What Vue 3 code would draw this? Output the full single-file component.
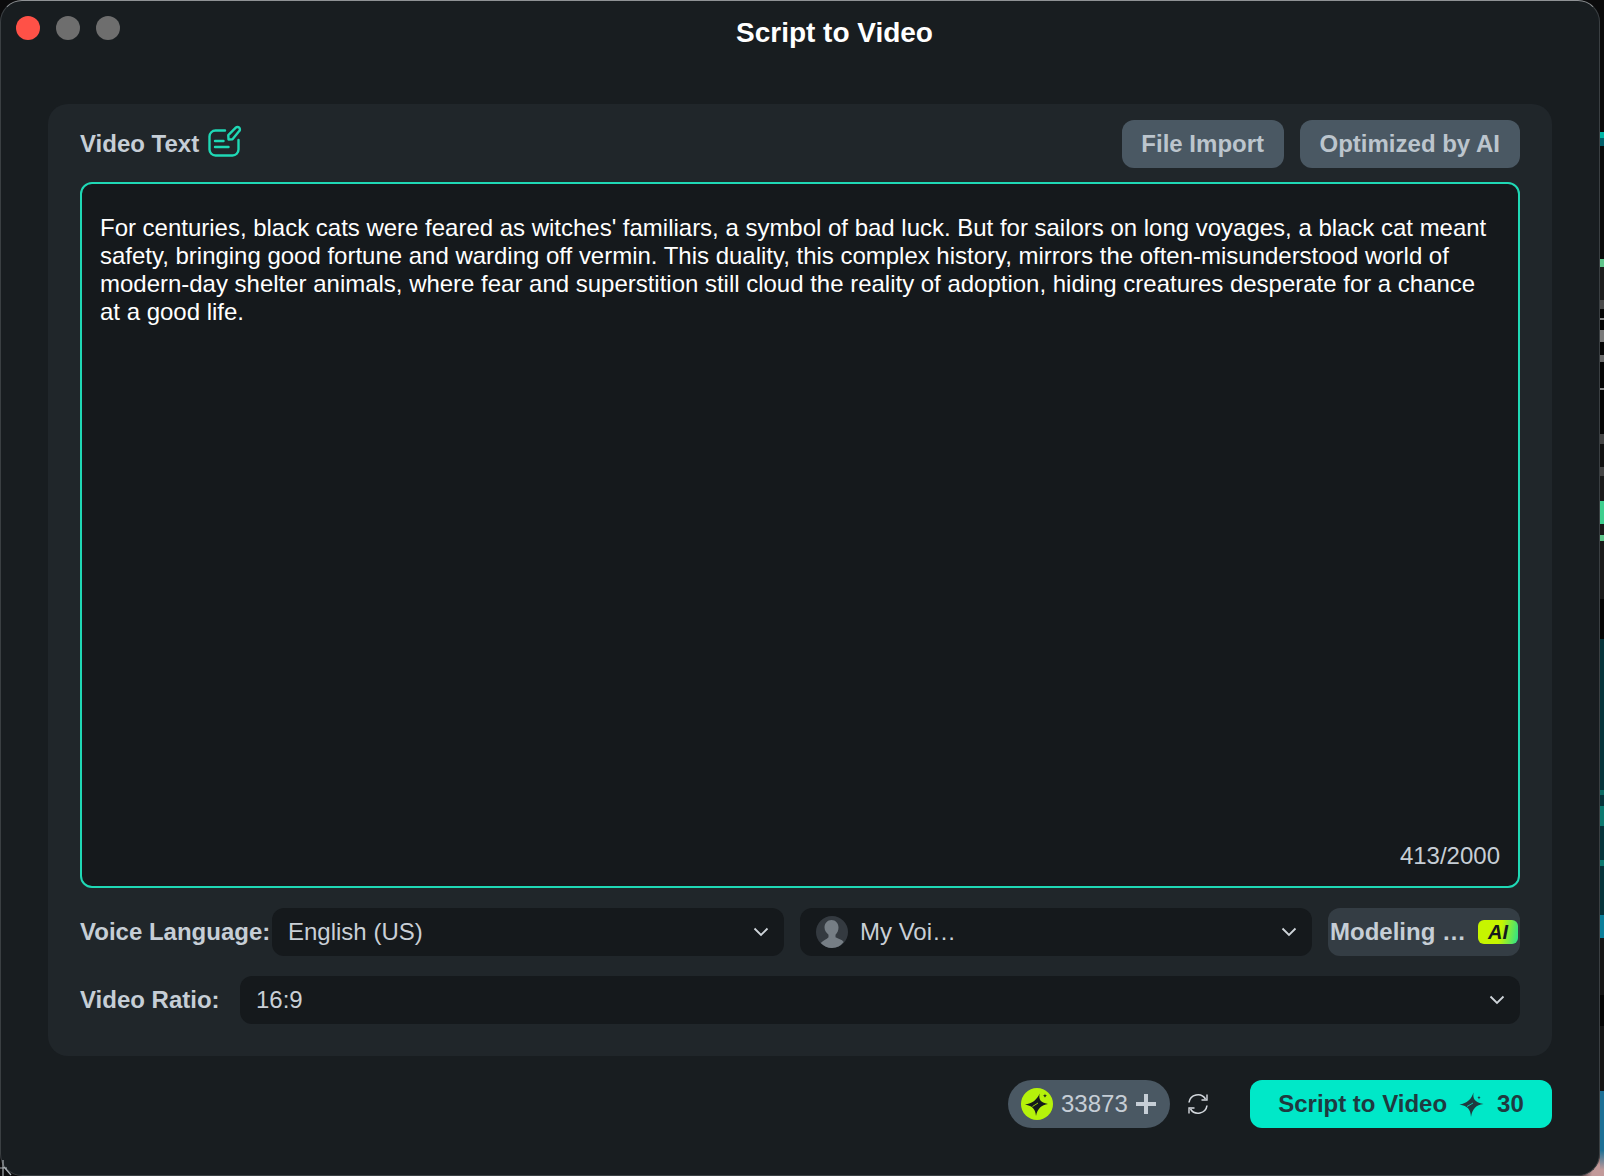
<script setup>
const videoText = "For centuries, black cats were feared as witches' familiars, a symbol of bad luck. But for sailors on long voyages, a black cat meant safety, bringing good fortune and warding off vermin. This duality, this complex history, mirrors the often-misunderstood world of modern-day shelter animals, where fear and superstition still cloud the reality of adoption, hiding creatures desperate for a chance at a good life."
</script>

<template>
  <div class="desktop">
    <div class="window">
      <header class="titlebar">
        <div class="lights">
          <span class="light red"></span>
          <span class="light"></span>
          <span class="light"></span>
        </div>
        <h1 class="title">Script to Video</h1>
      </header>

      <main class="panel">
        <div class="panel-head">
          <div class="label-wrap">
            <span class="label">Video Text</span>
            <svg class="edit-icon" width="34" height="34" viewBox="0 0 34 34" fill="none" stroke="#1fd8b5" stroke-width="2.400" stroke-linecap="round" stroke-linejoin="round">
              <path d="M17 6.500H7.500a6 6 0 0 0-6 6v13a6 6 0 0 0 6 6h17a6 6 0 0 0 6-6V16" />
              <path d="M7 17h8.500M7 23h13.500" />
              <path d="M20.500 15.500l-.2-4.300L27.800 3.700a2.400 2.400 0 0 1 3.400 0 2.400 2.400 0 0 1 0 3.400L24.500 15.200z" />
            </svg>
          </div>
          <div class="head-actions">
            <button class="ghost-btn file-btn">File Import</button>
            <button class="ghost-btn">Optimized by AI</button>
          </div>
        </div>

        <div class="editor">
          <p class="editor-text">{{ videoText }}</p>
          <span class="counter">413/2000</span>
        </div>

        <div class="row voice-row">
          <span class="label">Voice Language:</span>
          <div class="select">
            <span>English (US)</span>
            <svg class="chevron" width="16" height="10" viewBox="0 0 16 10" fill="none" stroke="#cfd5da" stroke-width="1.800"><path d="M1.500 1.500L8 8l6.500-6.500" /></svg>
          </div>
          <div class="select voice-select">
            <svg class="avatar" width="32" height="32" viewBox="0 0 32 32">
              <circle cx="16" cy="16" r="16" fill="#343a40" />
              <path d="M15.500 4c4 0 7 3.200 7 7.600 0 3-1.300 5.600-3 7.200v2.400c2.500 1.500 6.500 2.200 8.200 4.700A15.800 15.800 0 0 1 16 32 15.800 15.800 0 0 1 4.800 27c1.700-2.600 6-3.300 7.700-5.800v-2.400c-1.800-1.600-4-4.200-4-7.200C8.500 7.200 11.500 4 15.500 4z" fill="#767e85" />
            </svg>
            <span class="voice-name">My Voi…</span>
            <svg class="chevron" width="16" height="10" viewBox="0 0 16 10" fill="none" stroke="#cfd5da" stroke-width="1.800"><path d="M1.500 1.500L8 8l6.500-6.500" /></svg>
          </div>
          <div class="modeling">
            <span>Modeling …</span>
            <span class="ai-badge">AI</span>
          </div>
        </div>

        <div class="row ratio-row">
          <span class="label">Video Ratio:</span>
          <div class="select">
            <span>16:9</span>
            <svg class="chevron" width="16" height="10" viewBox="0 0 16 10" fill="none" stroke="#cfd5da" stroke-width="1.800"><path d="M1.500 1.500L8 8l6.500-6.500" /></svg>
          </div>
        </div>
      </main>

      <footer class="footer">
        <div class="credits">
          <span class="coin">
            <svg width="28" height="28" viewBox="0 0 28 28" fill="#15191c">
              <path d="M16.500 3.500C15.800 9.500 17 12.500 25 14 18.500 15 14.500 18.500 13 26 12.500 19.500 10 16 2 14.500 9 13.500 14.500 9.500 16.500 3.500z" />
              <path d="M22 3.500c.2 1.500.7 2.100 2.200 2.300-1.500.3-2 .8-2.200 2.300-.2-1.500-.7-2-2.200-2.300 1.500-.2 2-.8 2.200-2.300z" />
              <path d="M9.500 16.500 15 13" stroke="#b5f20b" stroke-width="0.800" />
            </svg>
          </span>
          <span class="credit-count">33873</span>
          <svg width="20" height="20" viewBox="0 0 20 20" stroke="#c6ced6" stroke-width="4"><path d="M10 0v20M0 10h20" /></svg>
        </div>
        <svg class="refresh" width="22" height="22" viewBox="0 0 22 22" fill="none" stroke="#d3d8dd" stroke-width="1.600">
          <path d="M2 9.500A9 9 0 0 1 18.500 6" />
          <path d="M20 12.500A9 9 0 0 1 3.500 16" />
          <path d="M20 1.500V7h-5.500" stroke-width="1.400" />
          <path d="M2 20.500V15h5.500" stroke-width="1.400" />
        </svg>
        <button class="primary-btn">
          <span>Script to Video</span>
          <svg width="26" height="28" viewBox="0 0 26 28" fill="#1f3a40">
            <path d="M14.500 2.500C13.800 8.500 15 12 24.500 14 17 15 13.500 18.500 12 27 11.500 19.500 9 16 .5 14.500 8 13.500 12.500 9 14.500 2.500z" />
            <path d="M20 5.500c.2 1.400.7 1.900 2 2.100-1.300.3-1.800.8-2 2.100-.2-1.300-.7-1.800-2-2.100 1.300-.2 1.800-.7 2-2.100z" />
            <path d="M8 16.500 14 13" stroke="#00e8c8" stroke-width="0.800" />
          </svg>
          <span>30</span>
        </button>
      </footer>
    </div>
    <div class="backdrop-strip"></div>
    <svg class="corner-mark" width="14" height="18" viewBox="0 0 14 18" fill="none" stroke="#aab0b4" stroke-width="1.200">
      <path d="M3 2v16M0 10h7M4 9l7 8" />
    </svg>
  </div>
</template>

<style>
html, body {
  margin: 0;
  background: #0b0b0c;
}
</style>

<style scoped>
.desktop {
  position: relative;
  width: 1604px;
  height: 1176px;
  display: flex;
  overflow: hidden;
  background: radial-gradient(circle 30px at 100% 100%, #c29a9a 40%, transparent 100%), #0b0b0c;
  font-family: "Liberation Sans", Arial, sans-serif;
}

.window {
  box-sizing: border-box;
  width: 1600px;
  height: 1176px;
  flex-shrink: 0;
  background: #181d20;
  border: 1px solid #3a3f42;
  border-top-color: #8f9295;
  border-radius: 22px;
}

.backdrop-strip {
  flex: 1;
  background: linear-gradient(
    to bottom,
    #0a0a0a 0 132px,
    #00b5a5 132px 138px,
    #005f6a 138px 146px,
    #0a0a0a 146px 259px,
    #5fc58a 259px 267px,
    #1c1c1c 267px 300px,
    #4a4a4a 300px 309px,
    #050505 309px 318px,
    #8a8a8a 318px 320px,
    #050505 320px 330px,
    #7a7a7a 330px 342px,
    #050505 342px 355px,
    #6a6a6a 355px 362px,
    #050505 362px 388px,
    #8a8a8a 388px 390px,
    #050505 390px 434px,
    #444 434px 444px,
    #111 444px 467px,
    #444 467px 476px,
    #1a1a1a 476px 501px,
    #3ecf8e 501px 524px,
    #1a1a1a 524px 535px,
    #5fc58a 535px 541px,
    #1a1a1a 541px 599px,
    #050505 599px 639px,
    #06343a 639px 790px,
    #0b6a62 790px 795px,
    #06343a 795px 806px,
    #0b7a70 806px 826px,
    #06343a 826px 860px,
    #0b7a70 860px 866px,
    #06343a 866px 915px,
    #0a7f9a 915px 938px,
    #151515 938px 995px,
    #050505 995px 1026px,
    #151515 1026px 1091px,
    #1c6f95 1091px 1150px,
    #c29a9a 1170px
  );
}

.corner-mark {
  position: absolute;
  left: 0;
  bottom: 0;
}

.titlebar {
  height: 63px;
  margin-bottom: 40px;
  padding: 15px 50px 0 15px;
  box-sizing: border-box;
  display: flex;
}

.lights {
  display: flex;
  gap: 16px;
  height: 24px;
}

.light {
  width: 24px;
  height: 24px;
  border-radius: 50%;
  background: #6e6e6e;
}

.light.red {
  background: #ff5147;
}

.title {
  flex: 1;
  margin: 0;
  padding-top: 1px;
  font-size: 28px;
  line-height: 32px;
  font-weight: 700;
  letter-spacing: -0.02px;
  color: #fff;
  text-align: center;
}

.panel {
  box-sizing: border-box;
  width: 1504px;
  height: 952px;
  margin-left: 47px;
  padding: 16px 32px 32px;
  background: #20262a;
  border-radius: 20px;
  display: flex;
  flex-direction: column;
}

.panel-head {
  height: 48px;
  display: flex;
  align-items: center;
  justify-content: space-between;
  margin-bottom: 14px;
}

.label-wrap {
  display: flex;
  align-items: center;
  gap: 9px;
}

.label {
  font-size: 24px;
  font-weight: 700;
  color: #c6ced6;
  white-space: nowrap;
}

.edit-icon {
  margin-top: -6px;
}

.head-actions {
  display: flex;
  gap: 16px;
}

.ghost-btn {
  height: 48px;
  padding: 0 20px;
  border: 0;
  border-radius: 12px;
  background: #4a5863;
  color: #bcc5cd;
  font: 700 24px "Liberation Sans", Arial, sans-serif;
}

.file-btn {
  padding: 0 19.500px;
}

.editor {
  box-sizing: border-box;
  height: 706px;
  position: relative;
  border: 2px solid #1fd8b5;
  border-radius: 12px;
  background: #15191c;
  padding: 30px 20px 0 18px;
}

.editor-text {
  margin: 0;
  font-size: 24px;
  line-height: 28px;
  letter-spacing: -0.012px;
  color: #fff;
}

.counter {
  position: absolute;
  right: 18px;
  bottom: 16px;
  font-size: 24px;
  line-height: 28px;
  color: #c6ced6;
}

.row {
  display: flex;
  align-items: center;
  height: 48px;
}

.voice-row {
  margin-top: 20px;
}

.ratio-row {
  margin-top: 20px;
}

.voice-row .label {
  width: 192px;
}

.ratio-row .label {
  width: 160px;
}

.select {
  box-sizing: border-box;
  flex: 1;
  height: 48px;
  min-width: 0;
  display: flex;
  align-items: center;
  justify-content: space-between;
  padding: 0 15px 0 16px;
  border-radius: 12px;
  background: #15191c;
  color: #c9cfd6;
  font-size: 24px;
}

.voice-row .select {
  flex: none;
  width: 512px;
}

.voice-select {
  margin-left: 16px;
  justify-content: flex-start;
}

.avatar {
  margin-right: 12px;
}

.voice-name {
  flex: 1;
}

.modeling {
  box-sizing: border-box;
  width: 192px;
  height: 48px;
  margin-left: 16px;
  display: flex;
  align-items: center;
  justify-content: space-between;
  padding: 0 2px 0 2px;
  border-radius: 12px;
  background: #343d44;
  color: #c6ced6;
  font-size: 24px;
  font-weight: 700;
  white-space: nowrap;
}

.ai-badge {
  width: 40px;
  height: 24px;
  border-radius: 6px;
  background: linear-gradient(100deg, #c6f500 55%, #27e08e 100%);
  color: #15191c;
  font-size: 20px;
  line-height: 24px;
  font-style: italic;
  text-align: center;
}

.footer {
  display: flex;
  align-items: center;
  justify-content: flex-end;
  margin: 24px 47px 0 0;
  height: 48px;
}

.credits {
  box-sizing: border-box;
  width: 162px;
  height: 48px;
  display: flex;
  align-items: center;
  padding: 0 14px 0 13px;
  border-radius: 24px;
  background: #4a5863;
}

.coin {
  width: 32px;
  height: 32px;
  flex-shrink: 0;
  display: flex;
  align-items: center;
  justify-content: center;
  border-radius: 50%;
  background: #b5f20b;
}

.credit-count {
  flex: 1;
  margin-left: 8px;
  font-size: 24px;
  color: #c6ced6;
}

.refresh {
  margin: 0 41px 0 17px;
}

.primary-btn {
  box-sizing: border-box;
  width: 302px;
  height: 48px;
  display: flex;
  align-items: center;
  justify-content: center;
  gap: 12px;
  border: 0;
  border-radius: 12px;
  background: #00e8c8;
  color: #1f3a40;
  font: 700 24px "Liberation Sans", Arial, sans-serif;
}
</style>
